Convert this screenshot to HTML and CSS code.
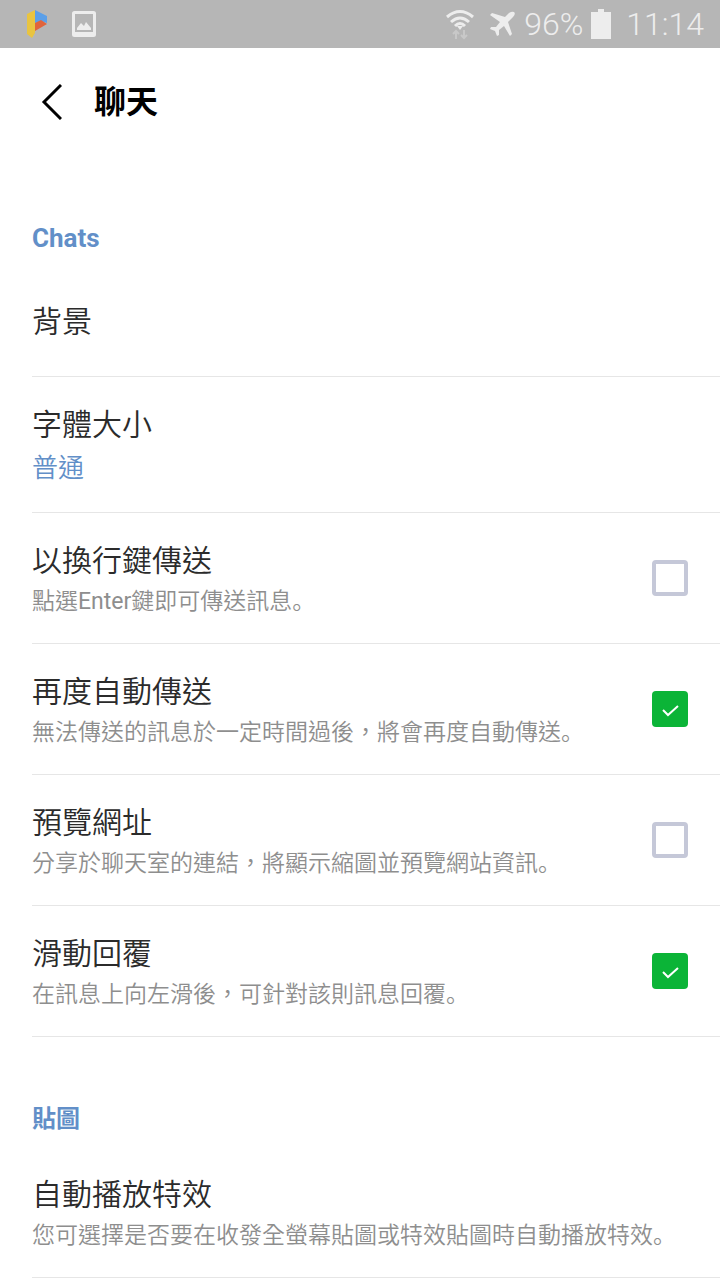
FILE: index.html
```
<!DOCTYPE html>
<html lang="zh-Hant">
<head>
  <meta charset="UTF-8" />
  <meta name="viewport" content="width=device-width, initial-scale=1.0"/>
  <title>聊天</title>
  <link rel="stylesheet" href="styles.css">
</head>
<body>

<!-- status bar -->
<div class="status-bar">
  <div class="status-left">
    <svg width="20" height="30" viewBox="0 0 20 30" aria-hidden="true">
      <path d="M0 5 8 1V24L5 29 0 25Z" fill="#e9c440"/>
      <path d="M8 1 20 7V14L14 12 8 14Z" fill="#5b9fe8"/>
      <path d="M8 14 14 11 20 15 8 22Z" fill="#e0643c"/>
    </svg>
    <svg width="24" height="26" viewBox="0 0 24 26" aria-hidden="true">
      <rect x="1.5" y="1.5" width="21" height="23" rx="1" fill="none" stroke="#ededed" stroke-width="3"/>
      <path d="M1 21H23V25H1Z" fill="#ededed"/>
      <path d="M5 19V17L9 12 12 15 14 11 19 17V19Z" fill="#ededed"/>
    </svg>
  </div>
  <div class="status-right">
    <svg width="30" height="32" viewBox="0 0 30 32" fill="none" stroke="#ededed" stroke-width="3" aria-hidden="true">
      <path d="M2 9Q15-2 28 9M6 14Q15 6 24 14M10 18Q15 13 20 18"/>
      <path d="M12 18 15 22 18 18Z" fill="#ededed" stroke="none"/>
      <path d="M11 23V31M8 26 11 23 14 26M19 22V30M16 27 19 30 22 27" stroke="#c8c8c8" stroke-width="2"/>
    </svg>
    <svg class="plane" width="26" height="26" viewBox="0 0 26 26" fill="#ededed" aria-hidden="true">
      <path d="M24 1Q26 3 23 6L18 11 22 23 20 25 14 15 9 19V24L7 25 5 20 0 18 1 16H6L10 11 0 4 2 2 15 6 19 2Q22 0 24 1Z"/>
    </svg>
    <span class="battery-text">96%</span>
    <svg width="20" height="30" viewBox="0 0 20 30" fill="#ededed" aria-hidden="true">
      <path d="M0 3H7V0H13V3H20V30H0Z"/>
    </svg>
    <span class="clock">11:14</span>
  </div>
</div>

<header class="title-bar">
  <button class="back-btn" aria-label="返回">
    <svg width="22" height="36" viewBox="0 0 22 36" fill="none" stroke="#000" stroke-width="3" aria-hidden="true">
      <path d="M21 1 4 18 21 35"/>
    </svg>
  </button>
  <h1>聊天</h1>
</header>

<main>
  <section class="group">
    <h2>Chats</h2>
    <a class="row single" href="#background">
      <span class="row-title">背景</span>
    </a>
    <a class="row" href="#font-size">
      <span class="row-text">
        <span class="row-title">字體大小</span>
        <span class="row-value">普通</span>
      </span>
    </a>
    <label class="row" for="enterSend">
      <span class="row-text">
        <span class="row-title">以換行鍵傳送</span>
        <span class="row-desc">點選<span class="latin">Enter</span>鍵即可傳送訊息<span class="stop" lang="ja">。</span></span>
      </span>
      <input type="checkbox" id="enterSend" />
    </label>
    <label class="row" for="autoResend">
      <span class="row-text">
        <span class="row-title">再度自動傳送</span>
        <span class="row-desc">無法傳送的訊息於一定時間過後，將會再度自動傳送<span class="stop" lang="ja">。</span></span>
      </span>
      <input type="checkbox" id="autoResend" checked />
    </label>
    <label class="row" for="urlPreview">
      <span class="row-text">
        <span class="row-title">預覽網址</span>
        <span class="row-desc">分享於聊天室的連結，將顯示縮圖並預覽網站資訊<span class="stop" lang="ja">。</span></span>
      </span>
      <input type="checkbox" id="urlPreview" />
    </label>
    <label class="row" for="swipeReply">
      <span class="row-text">
        <span class="row-title">滑動回覆</span>
        <span class="row-desc">在訊息上向左滑後，可針對該則訊息回覆<span class="stop" lang="ja">。</span></span>
      </span>
      <input type="checkbox" id="swipeReply" checked />
    </label>
  </section>

  <section class="group">
    <h2 class="cjk">貼圖</h2>
    <a class="row" href="#effects">
      <span class="row-text">
        <span class="row-title">自動播放特效</span>
        <span class="row-desc">您可選擇是否要在收發全螢幕貼圖或特效貼圖時自動播放特效<span class="stop" lang="ja">。</span></span>
      </span>
    </a>
  </section>
</main>

</body>
</html>
```
FILE: styles.css
```
* {
  box-sizing: border-box;
}

body {
  margin: 0;
  background-color: #fff;
  color: #2b2b2b;
  font-family: Roboto, "Noto Sans CJK TC", sans-serif;
}

.status-bar {
  display: flex;
  justify-content: space-between;
  align-items: center;
  height: 48px;
  padding: 0 16px 0 27px;
  background-color: #b6b6b6;
  color: #ededed;
}

.status-left,
.status-right {
  display: flex;
  align-items: center;
}

.status-left {
  gap: 25px;
}

.battery-text,
.clock {
  font-size: 32px;
  font-weight: 300;
  line-height: 48px;
}

.plane {
  margin-left: 15px;
}

.battery-text {
  margin: 0 8px;
}

.clock {
  margin-left: 15px;
}

.title-bar {
  display: flex;
  align-items: center;
  height: 108px;
  padding-left: 32px;
}

.back-btn {
  display: flex;
  padding: 8px;
  border: none;
  background: none;
  cursor: pointer;
}

h1 {
  margin: 0 0 0 24px;
  color: #000;
  font-size: 32px;
  font-weight: bold;
  line-height: 48px;
}

.group {
  padding-top: 54px;
}

h2 {
  margin: 0;
  padding: 0 32px;
  color: #628fc8;
  font-size: 26px;
  font-weight: bold;
  line-height: 56px;
}

h2.cjk {
  font-size: 24px;
}

.row {
  display: flex;
  justify-content: space-between;
  align-items: center;
  margin-left: 32px;
  padding: 24px 32px 24px 0;
  border-bottom: 1px solid #e6e6e6;
  color: inherit;
  text-decoration: none;
  cursor: pointer;
}

.row.single {
  padding: 33px 32px 31px 0;
}

.row-text {
  display: flex;
  flex-direction: column;
  margin: 1px 0 -1px;
}

.row-title {
  font-size: 30px;
  font-weight: 350;
  line-height: 46px;
}

.row-value {
  color: #628fc8;
  font-size: 26px;
  font-weight: 350;
  line-height: 41px;
}

.row-desc {
  color: #8e8e8e;
  font-size: 23px;
  font-weight: 350;
  line-height: 36px;
}

.latin {
  font-weight: 400;
}

/* full stop sits at the lower left of its cell */
.stop {
  font-family: "Noto Sans CJK JP", sans-serif;
  line-height: 1;
}

input[type="checkbox"] {
  flex: none;
  appearance: none;
  width: 36px;
  height: 36px;
  margin: 0;
  border: 4px solid #c5c8d8;
  border-radius: 4px;
  cursor: pointer;
}

input[type="checkbox"]:checked {
  border: none;
  background: #0bb437 url("data:image/svg+xml,%3Csvg xmlns='http://www.w3.org/2000/svg' viewBox='0 0 36 36'%3E%3Cpath d='M11 19l5 5 10-9' fill='none' stroke='%23fff' stroke-width='2'/%3E%3C/svg%3E") center / 36px no-repeat;
}
```
